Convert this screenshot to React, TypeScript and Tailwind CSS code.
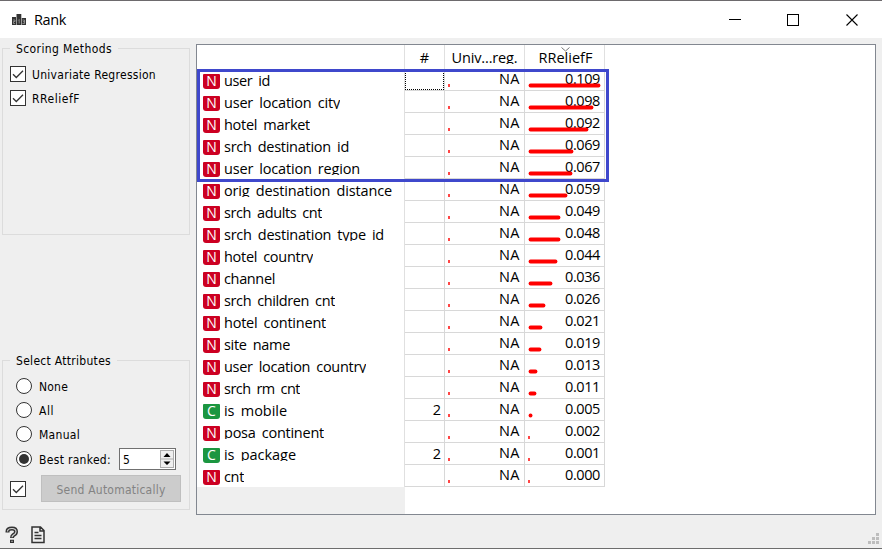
import { useLayoutEffect, useRef, useState } from "react";
import type { ReactNode } from "react";

const UI = "font-['DejaVu_Sans_Condensed','DejaVu_Sans',sans-serif] [font-stretch:condensed] text-[12px]";

// Single-line text tracked so that it spans the given width.
function Fit({ w, children, className = "" }: { w: number; children: string; className?: string }) {
  const ref = useRef<HTMLSpanElement>(null);
  const [gap, setGap] = useState(0);
  useLayoutEffect(() => {
    const el = ref.current;
    if (!el) return;
    el.style.letterSpacing = "0px";
    setGap((w - el.getBoundingClientRect().width) / children.length);
    el.style.letterSpacing = "";
  }, [w, children]);
  return (
    <span ref={ref} className={`inline-block whitespace-pre ${className}`} style={{ letterSpacing: `${gap}px` }}>
      {children}
    </span>
  );
}

type Row = { name: string; w: number; score: string; bar: number; values?: string };

const rows: Row[] = [
  { name: "user_id", w: 46, score: "0.109", bar: 72 },
  { name: "user_location_city", w: 116, score: "0.098", bar: 65 },
  { name: "hotel_market", w: 86, score: "0.092", bar: 60 },
  { name: "srch_destination_id", w: 125, score: "0.069", bar: 45 },
  { name: "user_location_region", w: 136, score: "0.067", bar: 44 },
  { name: "orig_destination_distance", w: 168, score: "0.059", bar: 39 },
  { name: "srch_adults_cnt", w: 98, score: "0.049", bar: 32 },
  { name: "srch_destination_type_id", w: 160, score: "0.048", bar: 32 },
  { name: "hotel_country", w: 89, score: "0.044", bar: 29 },
  { name: "channel", w: 51, score: "0.036", bar: 24 },
  { name: "srch_children_cnt", w: 111, score: "0.026", bar: 17 },
  { name: "hotel_continent", w: 102, score: "0.021", bar: 14 },
  { name: "site_name", w: 66, score: "0.019", bar: 13 },
  { name: "user_location_country", w: 142, score: "0.013", bar: 9 },
  { name: "srch_rm_cnt", w: 76, score: "0.011", bar: 8 },
  { name: "is_mobile", w: 63, score: "0.005", bar: 4, values: "2" },
  { name: "posa_continent", w: 100, score: "0.002", bar: 0 },
  { name: "is_package", w: 72, score: "0.001", bar: 0, values: "2" },
  { name: "cnt", w: 20, score: "0.000", bar: 0 },
];

function Bar({ width }: { width: number }) {
  return width > 0 ? (
    <svg className="absolute left-[3px] top-0" width="76" height="21">
      <path d={`M2.5 16.5h${width - 4 || 0.1}`} stroke="#f00" strokeWidth="3.8" strokeLinecap="round" />
    </svg>
  ) : (
    <span className="absolute left-[3px] top-[15px] h-[3px] w-[2px] bg-[#ff4646]" />
  );
}

function Check() {
  return (
    <span className="flex size-4 shrink-0 border border-[#333] bg-white">
      <svg viewBox="0 0 14 14" className="size-[14px]" fill="none" stroke="#333" strokeWidth="1.3">
        <path d="M2 7.2 5.3 10.5 12 3.7" />
      </svg>
    </span>
  );
}

function Radio({ on = false }: { on?: boolean }) {
  return (
    <span className="flex size-4 shrink-0 items-center justify-center rounded-full border border-[#333] bg-white">
      {on && <span className="size-[10px] rounded-full bg-[#333]" />}
    </span>
  );
}

function Group({ title, w, className, children }: { title: string; w: number; className: string; children: ReactNode }) {
  return (
    <fieldset className={`ml-[2px] w-[188px] border border-[#dcdcdc] ${className}`}>
      <legend className="ml-[7px] h-4 px-[6px] leading-4">
        <Fit w={w} className="relative top-px">{title}</Fit>
      </legend>
      {children}
    </fieldset>
  );
}

function Option({ label, w, on }: { label: string; w: number; on?: boolean }) {
  return (
    <div className="flex h-6 items-center gap-[7px] pl-[13px]">
      <Radio on={on} />
      <Fit w={w} className="pt-px">{label}</Fit>
    </div>
  );
}

export default function App() {
  return (
    <div className={`flex h-[549px] w-[882px] flex-col border-y border-t-[#6d6a6d] border-b-[#6d6d6d] bg-[#efefef] leading-4 text-black ${UI}`}>
      <header className="flex h-[37px] shrink-0 items-center bg-white pl-3">
        <svg width="14" height="12" viewBox="0 0 14 12">
          <path d="M0 3h4v8H0zM4.5 0h4.8v11H4.5zM9.8 4H14v7H9.8z" fill="#333" />
          <path d="M1 6h2v1.5H1.5V9.5H3M6.2 6.5 7.2 5.5V9.5M10.5 6h2v3.5h-2M11 7.7h1.5" stroke="#aaa" strokeWidth=".7" fill="none" />
        </svg>
        <Fit w={32} className="ml-2 font-['Open_Sans',sans-serif] text-[14.5px] leading-5 [font-stretch:normal]">Rank</Fit>
        <svg className="ml-auto mr-[22px]" width="132" height="14" viewBox="0 0 132 14" fill="none" stroke="#000" shapeRendering="crispEdges">
          <path d="M1 6.5h12M59.5 1.5h11v11h-11z" />
          <path d="m118.5 1.5 11 11m0-11-11 11" shapeRendering="auto" strokeWidth="1.1" />
        </svg>
      </header>

      <main className="flex h-[477px] shrink-0">
        <section className="flex w-[196px] shrink-0 flex-col pt-[2px]">
          <Group title="Scoring Methods" w={96} className="h-[195px]">
            <div className="mt-[10px] flex flex-col gap-2 pl-[7px]">
              <div className="flex h-4 items-center gap-[6px]"><Check /><Fit w={124} className="pt-px">Univariate Regression</Fit></div>
              <div className="flex h-4 items-center gap-[6px]"><Check /><Fit w={48} className="pt-px">RReliefF</Fit></div>
            </div>
          </Group>
          <Group title="Select Attributes" w={95} className="mt-[117px] h-[158px]">
            <div className="mt-[6px]">
              <Option label="None" w={29} />
              <Option label="All" w={15} />
              <Option label="Manual" w={41} />
              <div className="flex h-[26px] items-center">
                <Option label="Best ranked:" w={72} on />
                <div className="ml-2 flex h-[22px] w-[57px] items-center justify-between border border-[#707070] bg-white pl-[3px] pr-px">
                  <span className="pt-px">5</span>
                  <span className="flex h-[18px] w-[14px] flex-col border border-[#adadad] bg-[#efefef]">
                    <svg width="12" height="16" viewBox="0 0 12 16"><path d="M6 2 9.5 6h-7zM6 14 2.5 10.5h7z" /><path d="M0 8h12" stroke="#adadad" /></svg>
                  </span>
                </div>
              </div>
              <div className="mt-[3px] flex items-center gap-[15px] pl-[7px]">
                <Check />
                <button className="flex h-[27px] w-[140px] items-center justify-center border border-[#bfbfbf] bg-[#cccccc] pt-[2px] text-[#838383]">
                  <Fit w={109}>Send Automatically</Fit>
                </button>
              </div>
            </div>
          </Group>
        </section>

        <section className="relative mt-[6px] h-[471px] w-[680px] shrink-0 border border-[#828790] bg-white font-['Open_Sans',sans-serif] text-[14.5px] leading-5 [font-stretch:normal]">
          <div className="flex h-6 text-center">
            <span className="w-[208px] border-r border-[#e0e0e0]" />
            <span className="w-10 border-r border-[#e0e0e0] pt-[3px]">#</span>
            <span className="h-6 w-20 border-r border-[#e0e0e0]">
              <span className="block h-[19px] overflow-hidden pt-[3px]"><Fit w={66}>Univ...reg.</Fit></span>
            </span>
            <span className="relative w-20 border-r border-[#e0e0e0] pt-[3px]">
              <Fit w={54} className="relative left-px">RReliefF</Fit>
              <svg className="absolute left-[36px] top-[2px]" width="9" height="5" fill="none" stroke="#777"><path d="m.5.5 4 3.5 4-3.5" /></svg>
            </span>
          </div>
          {rows.map((r, i) => (
            <div key={r.name} className="flex h-[22px]">
              <div className="flex w-[208px] border-r border-[#e0e0e0] pl-[6px]">
                <span className={`mt-[5px] h-[15px] w-[17px] rounded-b-[3px] rounded-t-[1px] text-center text-[14px] leading-[14px] text-white ${r.values ? "bg-[#1b9640]" : "bg-[#cc0022]"}`}>
                  {r.values ? "C" : "N"}
                </span>
                <span className="ml-1 h-[18px] overflow-hidden pt-[2px]"><Fit w={r.w}>{r.name}</Fit></span>
              </div>
              <div className="relative w-10 border-b border-r border-[#d8d8d8] pr-[3px] pt-px text-right">
                {i === 0 && <span className="absolute inset-0 border border-dotted border-black" />}
                {r.values}
              </div>
              <div className="relative w-20 border-b border-r border-[#d8d8d8] pr-1 text-right">
                <Bar width={0} />
                <Fit w={21}>NA</Fit>
              </div>
              <div className="relative w-20 border-b border-r border-[#d8d8d8] pr-1 text-right">
                <Fit w={35}>{r.score}</Fit>
                <Bar width={r.bar} />
              </div>
            </div>
          ))}
          <div className="h-[27px] w-[208px] bg-[#efefef]" />
          <div className="absolute left-0 top-6 h-[113px] w-[412px] border-[3px] border-[#3f48cc]" />
        </section>
      </main>

      <footer className="flex flex-1 items-start pl-[5px] pt-[11px]">
        <svg width="14" height="18" viewBox="0 0 14 18" fill="none">
          <path d="M2.5 6.5V5.5q0-3 4.5-3 4 0 4 3.2 0 2-2.5 3.3-1.5 1-1.5 3M7 13.7v3.3" stroke="#333" strokeWidth="4" />
          <path d="M2.5 5.5q0-3 4.5-3 4 0 4 3.2 0 2-2.5 3.3-1.5 1-1.5 2.3M7 14.8v1.2" stroke="#d4d4d4" strokeWidth="1.1" />
        </svg>
        <svg className="ml-3" width="15" height="18" viewBox="0 0 15 18" fill="none" stroke="#333" strokeWidth="1.5">
          <path d="M1 1h8.5L13 4.5V16.5H1zM9 1v4h4M3.5 6.5h4M3.5 9.5h7M3.5 12.5h7" />
        </svg>
        <svg className="ml-auto mr-[3px] mt-[6px]" width="11" height="12" fill="#bdbdbd">
          <path d="M8 1h3v3H8zM4 5h3v3H4zM8 5h3v3H8zM0 9h3v3H0zM4 9h3v3H4zM8 9h3v3H8z" />
        </svg>
      </footer>
    </div>
  );
}
